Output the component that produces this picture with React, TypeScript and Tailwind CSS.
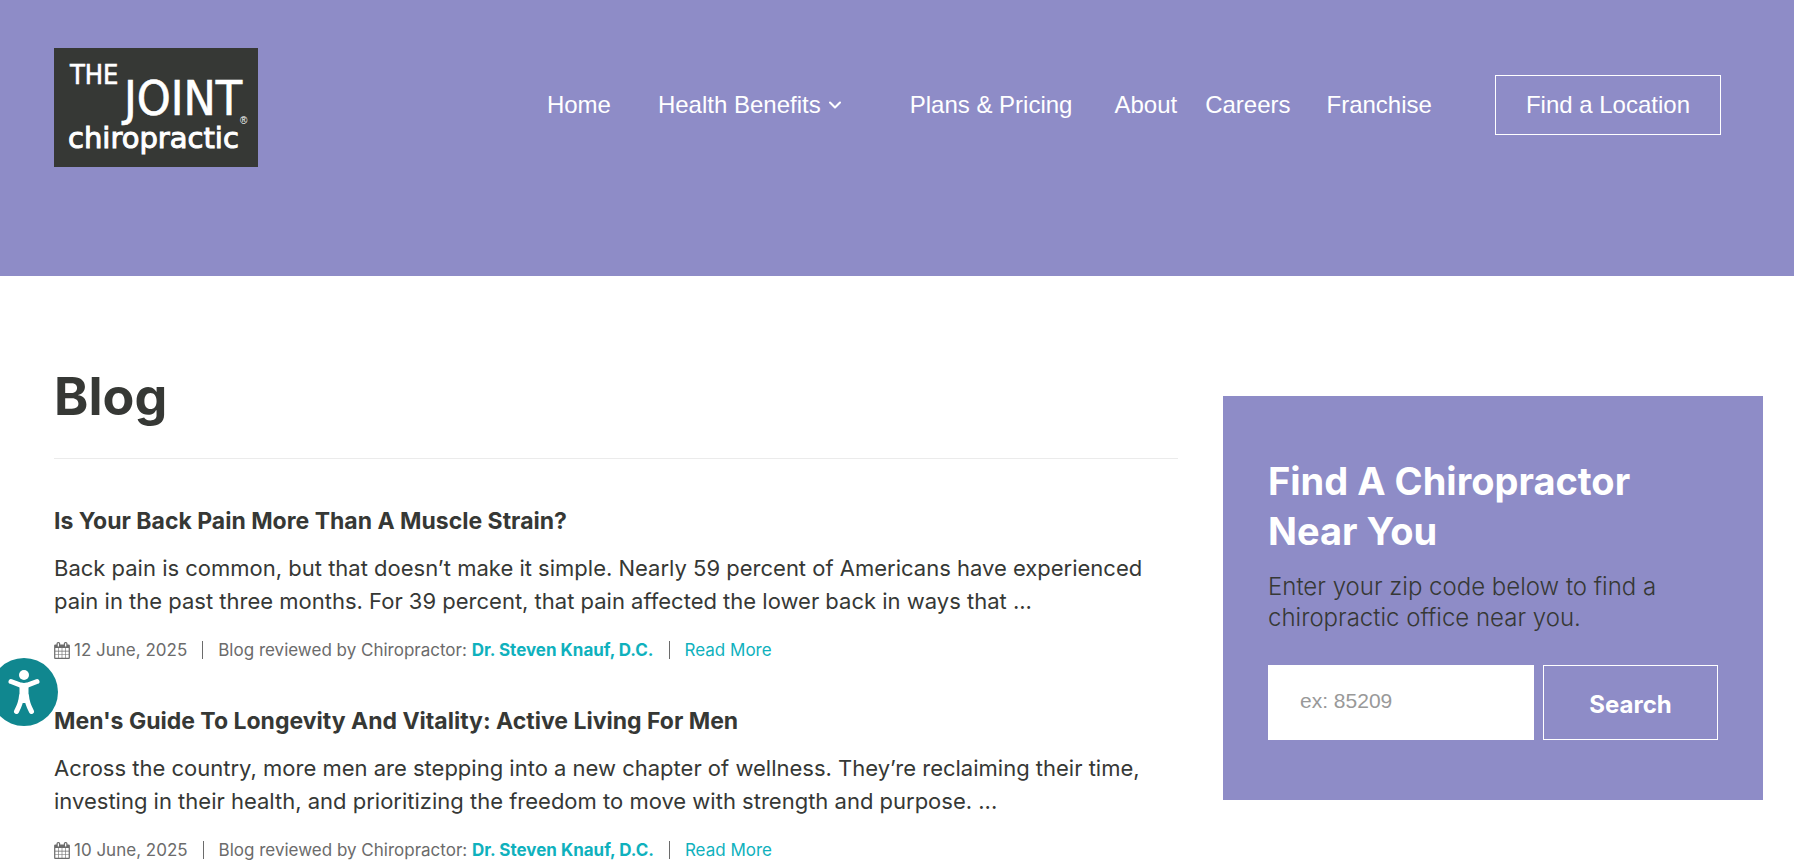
import { ChevronDown } from "lucide-react";

const posts = [
  {
    title: "Is Your Back Pain More Than A Muscle Strain?",
    excerpt:
      "Back pain is common, but that doesn’t make it simple. Nearly 59 percent of Americans have experienced pain in the past three months. For 39 percent, that pain affected the lower back in ways that ...",
    date: "12 June, 2025",
    reviewer: "Dr. Steven Knauf, D.C.",
  },
  {
    title: "Men's Guide To Longevity And Vitality: Active Living For Men",
    excerpt:
      "Across the country, more men are stepping into a new chapter of wellness. They’re reclaiming their time, investing in their health, and prioritizing the freedom to move with strength and purpose. ...",
    date: "10 June, 2025",
    reviewer: "Dr. Steven Knauf, D.C.",
  },
];

const Logo = () => (
  <svg
    viewBox="0 0 204 119"
    className="block w-[204px] h-[119px]"
    role="img"
    aria-label="The Joint Chiropractic"
  >
    <rect width="204" height="119" fill="#363835" />
    <g
      fill="#fff"
      stroke="#fff"
      strokeWidth="0.6"
      fontFamily="'DejaVu Sans Condensed', 'DejaVu Sans', sans-serif"
    >
      <text x="16" y="36" fontSize="27">THE</text>
      <text x="70" y="67" fontSize="48">JOINT</text>
    </g>
    <text x="186" y="76" fontSize="10" fill="#fff" fontFamily="'Liberation Sans', sans-serif">®</text>
    <text
      x="14"
      y="100"
      fontSize="29"
      fill="#fff"
      stroke="#fff"
      strokeWidth="1"
      fontFamily="'DejaVu Sans', sans-serif"
    >
      chiropractic
    </text>
  </svg>
);

const CalendarIcon = () => (
  <svg viewBox="0 0 1664 1792" className="w-4 h-[17px] shrink-0" fill="currentColor" aria-hidden="true">
    <path d="M128 1664h288v-288h-288v288zm352 0h320v-288h-320v288zm-352-352h288v-320h-288v320zm352 0h320v-320h-320v320zm-352-384h288v-288h-288v288zm736 736h320v-288h-320v288zm-384-736h320v-288h-320v288zm768 736h288v-288h-288v288zm-384-352h320v-320h-320v320zm-352-864v-288q0-13-9.5-22.5t-22.5-9.5h-64q-13 0-22.5 9.5t-9.5 22.5v288q0 13 9.5 22.5t22.5 9.5h64q13 0 22.5-9.5t9.5-22.5zm736 864h288v-320h-288v320zm-384-384h320v-288h-320v288zm384 0h288v-288h-288v288zm32-480v-288q0-13-9.5-22.5t-22.5-9.5h-64q-13 0-22.5 9.5t-9.5 22.5v288q0 13 9.5 22.5t22.5 9.5h64q13 0 22.5-9.5t9.5-22.5zm384-64v1280q0 52-38 90t-90 38h-1408q-52 0-90-38t-38-90v-1280q0-52 38-90t90-38h128v-96q0-66 47-113t113-47h64q66 0 113 47t47 113v96h384v-96q0-66 47-113t113-47h64q66 0 113 47t47 113v96h128q52 0 90 38t38 90z" />
  </svg>
);

const Header = () => (
  <header className="flex items-start justify-between bg-[#8e8cc7] pl-[54px] pr-[73px] pt-12 pb-[109px]">
    <a href="#">
      <Logo />
    </a>
    <nav className="mt-[27px] flex items-center whitespace-nowrap font-['Liberation_Sans',Arial,sans-serif] text-2xl text-white">
      <a href="#">Home</a>
      <a href="#" className="ml-[47px] flex items-center gap-1">
        Health Benefits
        <ChevronDown className="size-5" strokeWidth={2.5} />
      </a>
      <a href="#" className="ml-[65px]">Plans &amp; Pricing</a>
      <a href="#" className="ml-[42px]">About</a>
      <a href="#" className="ml-7">Careers</a>
      <a href="#" className="ml-9">Franchise</a>
      <a href="#" className="ml-[63px] border border-white px-[30px] py-[11px] leading-9">
        Find a Location
      </a>
    </nav>
  </header>
);

const Separator = () => <span className="mx-[15px] h-[18px] w-px bg-[#6b6b6b]" />;

const App = () => {
  return (
    <div className="min-h-screen bg-white font-[Inter,sans-serif] text-[#363835]">
      <Header />

      <div className="flex items-start gap-[45px] pl-[54px] pr-[31px]">
        <main className="min-w-0 flex-1">
          <h1 className="border-b border-[#ebebeb] pt-[91px] pb-[31px] text-[52px] leading-[60px] font-bold">
            Blog
          </h1>

          {posts.map((post) => (
            <article key={post.title} className="mt-11 first-of-type:mt-[47px]">
              <h2 className="text-[23px] leading-[30px] font-bold">{post.title}</h2>
              <p className="mt-4 text-[22px] leading-[33px]">{post.excerpt}</p>
              <div className="mt-5 flex items-center text-[17px] leading-6 text-[#6b6b6b]">
                <CalendarIcon />
                <span className="ml-1">{post.date}</span>
                <Separator />
                <span>
                  Blog reviewed by Chiropractor:{" "}
                  <a href="#" className="font-bold text-[#0fb1bd]">{post.reviewer}</a>
                </span>
                <Separator />
                <a href="#" className="text-[#0fb1bd]">Read More</a>
              </div>
            </article>
          ))}
        </main>

        <aside className="mt-[120px] w-[540px] shrink-0 bg-[#8e8cc7] px-[45px] py-[60px]">
          <h2 className="text-[38px] leading-[50px] font-bold text-white">
            Find A Chiropractor Near You
          </h2>
          <p className="mt-[15px] text-2xl leading-[31px] font-light">
            Enter your zip code below to find a chiropractic office near you.
          </p>
          <form className="mt-8 flex gap-[9px]" onSubmit={(e) => e.preventDefault()}>
            <input
              type="text"
              aria-label="Zip code"
              placeholder="ex: 85209"
              className="h-[75px] min-w-0 flex-1 bg-white px-8 pb-1 font-['Liberation_Sans',Arial,sans-serif] text-[21px] placeholder:text-[#999]"
            />
            <button type="submit" className="w-[175px] border border-white pt-1 text-2xl font-bold text-white">
              Search
            </button>
          </form>
        </aside>
      </div>

      <button
        type="button"
        aria-label="Accessibility options"
        className="fixed -left-[10px] top-[658px] size-[68px] rounded-full bg-[#10878f]"
      >
        <svg viewBox="0 0 68 68" className="size-full" aria-hidden="true">
          <circle cx="34" cy="17" r="5" fill="#fff" />
          <path
            d="M21 23.500l9.500 3.500q3.500 1 7 0l9.500-3.500"
            fill="none"
            stroke="#fff"
            strokeWidth="5"
            strokeLinecap="round"
          />
          <path d="M29.500 27h9v11q0 4 1.500 7h-12q1.500-3 1.500-7z" fill="#fff" />
          <path
            d="M31.500 38q-.5 7-5 15.500M36.500 38q.5 7 5 15.500"
            fill="none"
            stroke="#fff"
            strokeWidth="5"
            strokeLinecap="round"
          />
        </svg>
      </button>
    </div>
  );
};

export default App;
